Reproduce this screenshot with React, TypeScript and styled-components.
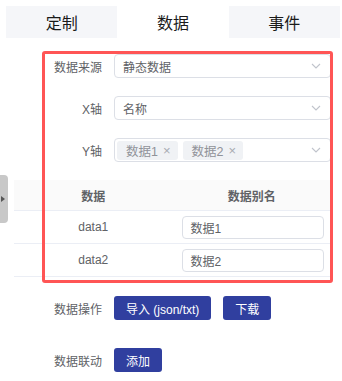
import styled, { createGlobalStyle } from 'styled-components';

const GlobalStyle = createGlobalStyle`
body {
	margin: 0;
	background: #fff;
	font-family: "Liberation Sans", "Noto Sans CJK SC", sans-serif;
}
`;

function Chevron() {
	return (
		<svg width="10" height="6" viewBox="0 0 10 6">
			<path d="M1 1 L5 5 L9 1" fill="none" stroke="#c0c4cc" strokeWidth="1.1" />
		</svg>
	);
}

export default function App() {
	return (
		<Page>
			<GlobalStyle />
			<Tabs>
				<Tab>定制</Tab>
				<Tab active>数据</Tab>
				<Tab>事件</Tab>
			</Tabs>
			<Body>
				<FormRow>
					<Label>数据来源</Label>
					<Select>
						<SelectText>静态数据</SelectText>
						<Chevron />
					</Select>
				</FormRow>
				<FormRow>
					<Label>X轴</Label>
					<Select>
						<SelectText>名称</SelectText>
						<Chevron />
					</Select>
				</FormRow>
				<FormRow>
					<Label>Y轴</Label>
					<Select>
						<TagList>
							<Tag>
								数据1<Close>×</Close>
							</Tag>
							<Tag>
								数据2<Close>×</Close>
							</Tag>
						</TagList>
						<Chevron />
					</Select>
				</FormRow>
				<Table>
					<thead>
						<tr>
							<Th>数据</Th>
							<Th>数据别名</Th>
						</tr>
					</thead>
					<tbody>
						{['1', '2'].map((n) => (
							<tr key={n}>
								<Td>data{n}</Td>
								<Td>
									<AliasInput>数据{n}</AliasInput>
								</Td>
							</tr>
						))}
					</tbody>
				</Table>
				<ActionRow>
					<Label>数据操作</Label>
					<Button>导入 (json/txt)</Button>
					<Button>下载</Button>
				</ActionRow>
				<ActionRow>
					<Label>数据联动</Label>
					<Button>添加</Button>
				</ActionRow>
			</Body>
			<Highlight />
			<Handle />
		</Page>
	);
}

const Page = styled.div`
position: relative;
width: 342px;
height: 381px;
overflow: hidden;
`;

const Tabs = styled.div`
display: flex;
padding: 6px 2px 0 6px;
`;

const Tab = styled.div<{ active?: boolean }>`
flex: 1;
height: 32px;
display: flex;
align-items: center;
justify-content: center;
font-family: "Noto Sans CJK SC", sans-serif;
font-size: 16px;
color: #1a1a1a;
background: ${(p) => (p.active ? '#fff' : '#f5f6f9')};
`;

const Body = styled.div`
padding: 16px 11px 0 14px;
`;

const FormRow = styled.div`
display: flex;
align-items: center;
height: 24px;
margin-bottom: 18px;
`;

const Label = styled.div`
width: 88px;
flex-shrink: 0;
margin-right: 12px;
text-align: right;
font-size: 12px;
color: #606266;
`;

const Select = styled.div`
flex: 1;
height: 24px;
box-sizing: border-box;
border: 1px solid #dcdfe6;
border-radius: 4px;
display: flex;
align-items: center;
padding: 0 9px 0 8px;
`;

const SelectText = styled.div`
flex: 1;
font-size: 12px;
color: #606266;
`;

const TagList = styled.div`
flex: 1;
display: flex;
gap: 5px;
margin-left: -6px;
`;

const Tag = styled.span`
display: inline-flex;
align-items: center;
height: 19px;
padding: 0 7px 0 9px;
border-radius: 3px;
background: #f0f2f5;
font-size: 12.5px;
color: #909399;
`;

const Close = styled.span`
margin-left: 5px;
font-size: 13px;
color: #a8abb2;
`;

const Table = styled.table`
width: 100%;
border-collapse: collapse;
table-layout: fixed;
font-size: 12px;
color: #606266;
`;

const Th = styled.th`
height: 30px;
padding: 0;
background: #fafafa;
border-bottom: 1px solid #ebeef5;
font-weight: bold;
color: #606266;
`;

const Td = styled.td`
height: 32px;
padding: 0;
text-align: center;
border-bottom: 1px solid #ebeef5;
`;

const AliasInput = styled.div`
box-sizing: border-box;
width: 142px;
height: 23px;
margin-left: 9px;
padding-left: 8px;
border: 1px solid #dcdfe6;
border-radius: 4px;
display: flex;
align-items: center;
text-align: left;
color: #606266;
`;

const ActionRow = styled.div`
display: flex;
align-items: center;
gap: 12px;
margin-top: 19px;
& + & {
	margin-top: 28px;
}
& > ${Label} {
	margin-right: 0;
}
`;

const Button = styled.button`
height: 24px;
padding: 0 12px;
min-width: 48px;
border: none;
border-radius: 3px;
background: #303f9f;
color: #fff;
font-family: "Liberation Sans", "Noto Sans CJK SC", sans-serif;
font-size: 12px;
`;

const Highlight = styled.div`
position: absolute;
left: 42px;
top: 51px;
width: 291px;
height: 232px;
box-sizing: border-box;
border: 3px solid #ff5555;
border-radius: 3px;
pointer-events: none;
`;

const Handle = styled.div`
position: absolute;
left: 0;
top: 175px;
width: 8px;
height: 48px;
background: #c8c8c8;
border-radius: 0 4px 4px 0;
&::after {
	content: '';
	position: absolute;
	left: 1px;
	top: 21px;
	border-left: 4px solid #555;
	border-top: 3px solid transparent;
	border-bottom: 3px solid transparent;
}
`;
